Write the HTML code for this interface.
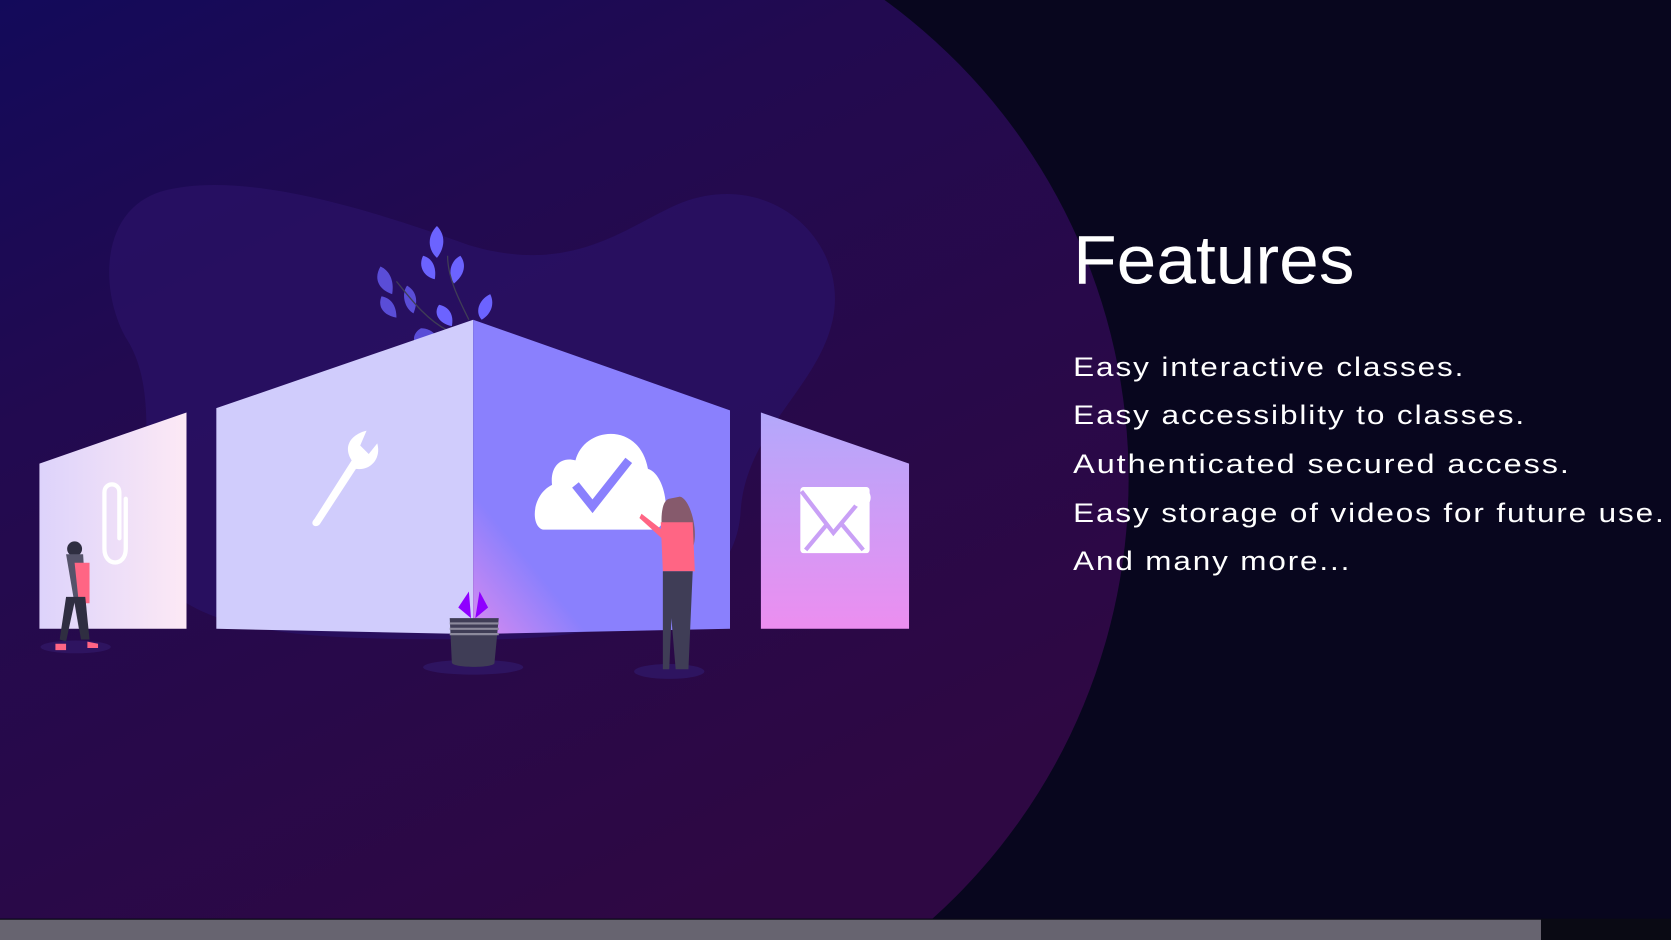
<!DOCTYPE html>
<html><head><meta charset="utf-8"><style>
html,body{margin:0;padding:0;background:#08061e;overflow:hidden;width:1671px;height:940px}
svg{display:block}
</style></head><body>
<svg width="1671" height="940" viewBox="0 0 1568 882" preserveAspectRatio="none" xmlns="http://www.w3.org/2000/svg">
<defs>
<linearGradient id="circ" x1="0" y1="0" x2="0.6" y2="1">
<stop offset="0" stop-color="#130a5a"/><stop offset="0.35" stop-color="#220a50"/><stop offset="1" stop-color="#2e0843"/>
</linearGradient>
<linearGradient id="lp" x1="0" y1="0" x2="1" y2="0"><stop offset="0" stop-color="#ddd3fb"/><stop offset="1" stop-color="#fde9f5"/></linearGradient>
<linearGradient id="rp" x1="0" y1="0" x2="0" y2="1"><stop offset="0" stop-color="#b3a8fb"/><stop offset="1" stop-color="#ec8ef0"/></linearGradient>
<linearGradient id="cr" x1="0" y1="1" x2="0.5" y2="0.5"><stop offset="0" stop-color="#d88af0"/><stop offset="0.45" stop-color="#8a80fd"/><stop offset="1" stop-color="#8a80fd"/></linearGradient>
</defs>
<rect width="1568" height="882" fill="#08061e"/>
<path d="M0,0 L830,0 A555,555 0 0 1 875,862 L0,862 Z" fill="url(#circ)"/>
<!-- blob -->
<path d="M150,180 C220,160 330,190 440,230 C540,260 590,210 640,190 C720,160 790,220 783,290 C775,360 700,400 695,480 C690,560 600,600 450,600 C300,600 160,600 140,520 C130,440 150,370 120,320 C95,280 90,200 150,180 Z" fill="#2a1265" opacity="0.75"/>
<!-- plant leaves -->
<g fill="#6c63ff">
<path d="M410,212 C400,222 402,235 410,242 C418,232 418,220 410,212Z"/>
<path d="M397,240 C392,250 398,260 408,262 C410,250 405,242 397,240Z"/>
<path d="M432,240 C422,245 420,258 426,266 C436,258 438,248 432,240Z"/>
<path d="M357,250 C350,262 356,272 368,276 C370,264 366,254 357,250Z" opacity=".75"/>
<path d="M382,268 C376,276 380,290 388,294 C392,284 392,274 382,268Z" opacity=".75"/>
<path d="M358,278 C354,288 360,296 372,298 C372,288 368,280 358,278Z" opacity=".75"/>
<path d="M460,276 C448,282 446,294 452,300 C462,294 464,284 460,276Z"/>
<path d="M412,286 C406,294 412,304 424,306 C426,296 422,288 412,286Z"/>
<path d="M395,308 C388,312 386,320 392,324 L410,316 C406,310 400,308 395,308Z" opacity=".75"/>
</g>
<path d="M420,240 C420,260 430,280 440,300 M372,264 C385,280 400,300 420,310" stroke="#3f3d56" stroke-width="1.2" fill="none"/>
<!-- panels -->
<polygon points="37,435 175,387 175,590 37,590" fill="url(#lp)"/>
<polygon points="203,383 444,300 444,595 203,590" fill="#d0ccfc"/>
<polygon points="444,300 685,385 685,590 444,595" fill="url(#cr)"/>
<polygon points="714,387 853,435 853,590 714,590" fill="url(#rp)"/>
<!-- paperclip -->
<path d="M112,505 L112,462 C112,452 98,452 98,462 L98,515 C98,532 118,532 118,515 L118,468" stroke="#fff" stroke-width="4" fill="none" stroke-linecap="round"/>
<!-- wrench -->
<path d="M295,487 L330,432 C322,420 328,408 344,404 L338,418 L346,426 L354,416 C358,430 348,442 334,440 L300,492 C296,496 290,492 295,487Z" fill="#fff"/>
<!-- cloud -->
<path d="M510,497 C498,495 498,465 518,455 C516,438 526,428 540,432 C548,400 600,395 608,440 C625,445 632,490 615,497 Z" fill="#fff"/>
<path d="M540,455 L556,475 L590,432" stroke="#8a80fd" stroke-width="8" fill="none"/>
<!-- envelope -->
<rect x="751" y="457" width="65" height="62" rx="3" fill="#fff"/>
<path d="M752,461 L782,500 L812,464 M756,516 L776,492 M810,516 L790,492" stroke="#c9a0f6" stroke-width="4" fill="none"/>
<circle cx="808" cy="467" r="9" fill="#fff"/>
<!-- shadows -->
<ellipse cx="71" cy="607" rx="33" ry="6" fill="#2e1460"/>
<ellipse cx="444" cy="626" rx="47" ry="7" fill="#2e1460"/>
<ellipse cx="628" cy="630" rx="33" ry="7" fill="#2e1460"/>
<!-- pot -->
<path d="M430,570 L440,555 L442,580 Z M458,570 L450,555 L446,580Z" fill="#8f00ff"/>
<path d="M422,580 L468,580 L464,622 C464,627 426,627 424,622Z" fill="#3f3d56"/>
<path d="M422,585 H468 M422,590 H468 M422,595 H468" stroke="#8c8a9c" stroke-width="2"/>
<!-- woman left -->
<circle cx="70" cy="515" r="7" fill="#2f2e41"/>
<path d="M62,520 L78,520 L82,590 L74,590 Z" fill="#55536a"/>
<path d="M70,528 L84,528 L84,566 L74,566Z" fill="#ff6584"/>
<path d="M62,560 L56,600 L62,602 L70,565 L76,600 L84,600 L80,560Z" fill="#2f2e41"/>
<path d="M52,604 L62,604 L62,610 L52,610Z M82,602 L92,604 L92,608 L82,608Z" fill="#ff6584"/>
<!-- woman right -->
<path d="M628,468 C618,470 620,500 624,512 L650,514 C656,500 648,468 638,466Z" fill="#865a6c"/>
<path d="M620,490 L650,490 L652,536 L622,536 Z" fill="#ff6584"/>
<path d="M602,482 L625,500 L622,506 L600,486Z" fill="#ff6584"/>
<path d="M622,536 L650,536 L646,628 L634,628 L630,580 L628,628 L622,628Z" fill="#3f3d56"/>
<!-- bottom scrollbar -->
<rect x="0" y="862" width="1568" height="20" fill="#0a0a14"/>
<rect x="0" y="863" width="1446" height="19" fill="#676470"/>
<g fill="#fff" font-family="Liberation Sans, sans-serif">
<text x="1007" y="266" font-size="64" textLength="264" lengthAdjust="spacingAndGlyphs">Features</text>
<g font-size="25" letter-spacing="1.5">
<text x="1007" y="353" textLength="368" lengthAdjust="spacingAndGlyphs">Easy interactive classes.</text>
<text x="1007" y="398" textLength="425" lengthAdjust="spacingAndGlyphs">Easy accessiblity to classes.</text>
<text x="1007" y="444" textLength="467" lengthAdjust="spacingAndGlyphs">Authenticated secured access.</text>
<text x="1007" y="490" textLength="556" lengthAdjust="spacingAndGlyphs">Easy storage of videos for future use.</text>
<text x="1007" y="535" textLength="261" lengthAdjust="spacingAndGlyphs">And many more...</text>
</g>
</g>
</svg>
</body></html>
